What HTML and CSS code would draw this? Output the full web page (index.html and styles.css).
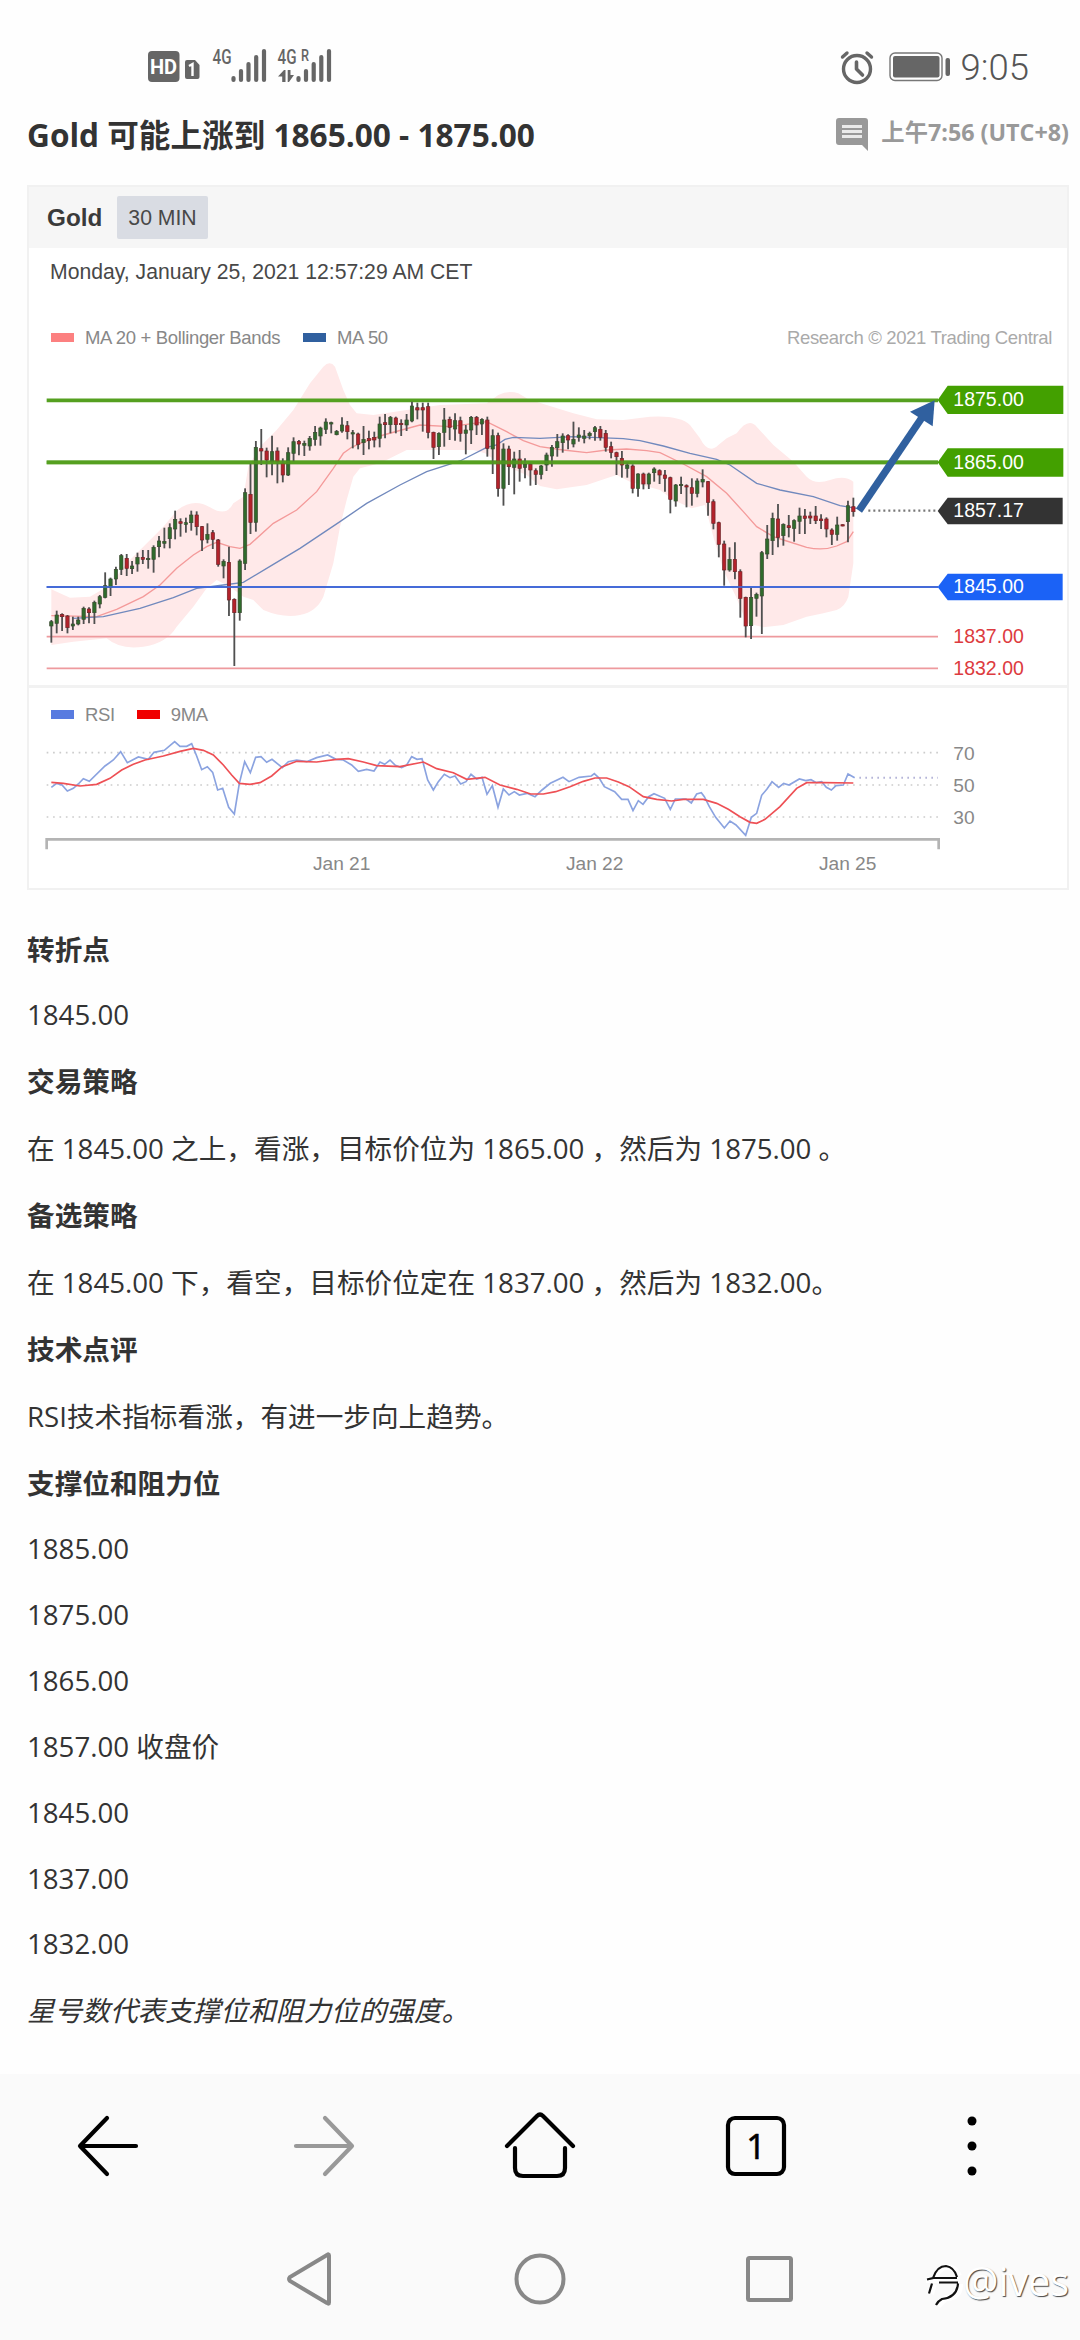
FILE: index.html
```html
<!DOCTYPE html>
<html lang="zh-CN">

<head>
    <meta charset="UTF-8">
    <meta name="viewport" content="width=device-width, initial-scale=1.0">
    <title>Gold 可能上涨到 1865.00 - 1875.00</title>
    <link rel="stylesheet" href="styles.css">
</head>

<body>
    <div class="status-bar">
        <svg class="signals" width="190" height="40" viewBox="146 46 190 40">
            <rect x="148" y="51" width="31.5" height="31" rx="4" />
            <text class="hd" x="150" y="74" textLength="27">HD</text>
            <path d="M187 60h8l4.500 5v12a2 2 0 0 1-2 2h-10.500a2 2 0 0 1-2-2v-15a2 2 0 0 1 2-2z" />
            <path class="sim" d="M189 66l3.500-2v12" />
            <text class="net" x="212.500" y="64" textLength="19" lengthAdjust="spacingAndGlyphs">4G</text>
            <path class="bars" d="M233.500 78v2M241 71v9M248.500 64v16M256.200 57v23M264 51v29" />
            <text class="net" x="277.500" y="64" textLength="19" lengthAdjust="spacingAndGlyphs">4G</text>
            <text class="net roam" x="301" y="61" textLength="8" lengthAdjust="spacingAndGlyphs">R</text>
            <path d="M282.200 82v-5.500H278l6-6.500h1.500v12zM287.700 70h2.800v5h3.500l-5 7h-1.300z" />
            <path class="bars" d="M298.500 78v2M306 71v9M313.700 64v16M321.300 57v23M329 51v29" />
        </svg>
        <div class="status-right">
            <svg width="34" height="36" viewBox="0 0 34 36">
                <g fill="none" stroke="#666" stroke-linecap="round">
                    <circle cx="17" cy="20" r="13.500" stroke-width="3.400" />
                    <path d="M16.500 13v7l6 6" stroke-width="3.600" stroke-linejoin="round" />
                    <path d="M2.500 8l4.500-4M31.500 8l-4.500-4" stroke-width="3.400" />
                </g>
            </svg>
            <svg width="62" height="30" viewBox="0 0 62 30">
                <rect x="1" y="1" width="52" height="27.500" rx="5" fill="none" stroke="#777" stroke-width="1.400" />
                <rect x="4" y="4" width="46.500" height="21.500" rx="2" fill="#666" />
                <rect x="56.500" y="6" width="4.500" height="18" rx="2" fill="#666" />
            </svg>
            <span class="clock">9:05</span>
        </div>
    </div>

    <div class="article">
        <div class="title-row">
            <h1>Gold 可能上涨到 1865.00 - 1875.00</h1>
            <div class="posted">
                <svg width="32" height="33" viewBox="0 0 32 33">
                    <path d="M3 0h26a3 3 0 0 1 3 3v30l-6-6H3a3 3 0 0 1-3-3V3a3 3 0 0 1 3-3z" fill="#999" />
                    <path d="M6 8.500h20M6 13.500h20M6 18.500h20" stroke="#fff" stroke-width="3" opacity=".8" />
                </svg>
                <span>上午7:56 (UTC+8)</span>
            </div>
        </div>

        <div class="card">
            <div class="card-head">
                <strong>Gold</strong>
                <span class="period">30 MIN</span>
            </div>
            <div class="date">Monday, January 25, 2021 12:57:29 AM CET</div>
            <div class="legend">
                <i class="swatch pink"></i><span class="bands">MA 20 + Bollinger Bands</span>
                <i class="swatch navy"></i><span>MA 50</span>
                <span class="credit">Research © 2021 Trading Central</span>
            </div>

            <svg class="price-chart" viewBox="-3 0 3114 1005">
                <path class="band" d="M64 718L90 730 120 743 180 740 240 705 290 640 340 590 400 530 440 482Q490 442 540 472T610 460L640 440 655 350 690 290 740 240 790 180 840 100 880 50Q900 30 915 50L940 120 960 165 980 190 1030 195 1130 180 1230 165 1370 160 1405 135Q1435 120 1465 130L1495 148 1550 165 1630 190 1700 208 1780 210 1860 200Q1950 195 1980 225L2010 265Q2035 315 2065 285L2090 265 2120 250Q2155 200 2180 230L2230 285 2290 335 2330 380Q2355 405 2400 390T2470 395L2470 640 2455 740Q2445 770 2420 780L2380 790 2330 800 2260 825 2200 832 2150 820 2120 745 2080 660 2050 560 2025 465 1985 475 1930 450 1890 420 1800 395 1760 375 1730 385 1670 405 1580 418 1530 408 1490 375 1430 350 1395 330 1365 310 1330 300 1130 300 1050 340 990 355 970 380 950 450 930 530 910 640 880 740Q860 785 810 795T700 780L670 750 640 740 600 710 560 690 530 715 490 770 440 830Q410 880 340 890T230 865L130 875 64 885z" />
                <path class="ma20" d="M64 797L200 800 260 778 340 740 390 705 440 655 490 615 530 590 560 577 600 590 630 595 660 583 730 520 800 480 860 425 910 355 940 310 965 292 990 280 1060 255 1170 225 1260 230 1370 215 1430 245 1480 272 1530 290 1600 300 1670 308 1730 300 1790 297 1850 302 1890 308 1960 342 2030 380 2090 430 2140 485 2180 530 2230 560 2270 573 2330 592Q2380 603 2420 588L2450 575 2470 545" />
                <path class="ma50" d="M130 805L220 800 330 775 430 743 500 715 580 705 640 697 730 643 810 595 930 515 1010 460 1110 405 1190 365 1290 333 1370 292 1400 285 1425 268 1450 262 1530 265 1630 260 1780 266 1830 272 1900 288 1980 310 2060 328 2100 345 2180 400 2250 420 2350 440 2430 467 2480 475" />
                <path class="support" d="M50 860H2724M50 955H2724" />
                <path class="pivot" d="M50 711H2724" />
                <path class="target" d="M50 151H2724M50 337H2724" />
                <g id="candles"></g>
                <path class="target top" d="M50 337H2724" />
                <path class="pivot top" d="M50 711H2724" />
                <path class="last" d="M2515 482H2724" />
                <path class="arrow" d="M2487 482L2675 204" />
                <path class="arrow-head" d="M2714 151L2640 185 2708 229z" />
                <path class="tag green" d="M2723 150L2753 107H3100V192H2753z" />
                <path class="tag green" d="M2723 337L2753 295H3100V380H2753z" />
                <path class="tag dark" d="M2723 483L2753 443H3098V523H2753z" />
                <path class="tag blue" d="M2723 711L2753 671H3098V751H2753z" />
                <g class="price">
                    <text x="2770" y="168">1875.00</text>
                    <text x="2770" y="358">1865.00</text>
                    <text x="2770" y="501">1857.17</text>
                    <text x="2770" y="729">1845.00</text>
                    <text class="red-text" x="2770" y="879">1837.00</text>
                    <text class="red-text" x="2770" y="975">1832.00</text>
                </g>
            </svg>

            <div class="legend rsi-legend">
                <i class="swatch sky"></i><span class="rsi">RSI</span>
                <i class="swatch red"></i><span>9MA</span>
            </div>

            <svg class="rsi-chart" viewBox="-3 150 3114 450">
                <path class="grid" d="M50 218H2726M50 315H2726M50 411H2726" />
                <path class="rsi-last" d="M2488 293H2724" />
                <polyline class="rsi-line" points="64,322 80,310 96,315 112,333 130,325 145,312 160,296 178,304 225,258 250,240 272,215 292,248 325,231 355,238 372,217 403,211 434,185 450,199 470,199 485,191 500,228 515,269 532,260 548,277 563,330 578,325 596,382 613,402 628,310 644,245 661,278 677,232 693,230 710,247 726,238 757,263 775,245 800,240 830,245 860,233 893,225 918,238 940,240 965,255 985,274 1010,268 1032,273 1050,246 1064,253 1080,240 1096,256 1115,263 1130,255 1145,230 1161,238 1176,236 1193,300 1210,330 1225,305 1243,283 1260,293 1275,288 1292,312 1308,305 1323,283 1340,297 1356,292 1371,343 1387,317 1404,382 1420,327 1437,345 1453,335 1468,345 1491,340 1515,350 1536,330 1561,310 1599,292 1617,305 1647,292 1684,288 1693,281 1708,295 1723,320 1754,335 1775,358 1794,358 1809,392 1825,362 1839,373 1856,350 1872,341 1904,355 1921,388 1936,357 1968,357 1984,369 2000,342 2014,338 2023,350 2038,380 2057,412 2083,444 2100,423 2118,435 2147,466 2164,412 2180,400 2195,346 2211,327 2226,305 2246,322 2261,310 2277,315 2308,297 2327,302 2343,299 2359,308 2375,305 2389,322 2404,330 2418,317 2440,315 2454,282 2474,293" />
                <polyline class="rsi-ma" points="64,307 100,310 150,318 200,313 240,295 275,270 310,253 345,240 400,228 450,214 490,205 520,211 550,225 580,255 605,285 628,310 660,313 690,308 725,288 757,260 800,244 860,246 920,238 955,236 1000,246 1040,257 1110,260 1180,246 1220,266 1270,278 1310,298 1365,292 1410,315 1460,328 1502,342 1540,342 1577,335 1620,320 1660,304 1695,294 1730,294 1765,306 1797,320 1840,350 1880,358 1925,363 1960,358 2020,358 2060,370 2095,388 2130,410 2160,427 2180,430 2205,418 2250,380 2300,325 2330,308 2380,308 2470,309" />
                <path class="axis" d="M50 508V478H2726V508" />
                <g class="labels">
                    <text x="2770" y="239">70</text>
                    <text x="2770" y="335">50</text>
                    <text x="2770" y="431">30</text>
                    <text class="day" x="935" y="569">Jan 21</text>
                    <text class="day" x="1694" y="569">Jan 22</text>
                    <text class="day" x="2453" y="569">Jan 25</text>
                </g>
            </svg>
        </div>

        <div class="text">
            <p class="cn"><strong>转折点</strong></p>
            <p>1845.00</p>
            <p class="cn"><strong>交易策略</strong></p>
            <p class="cn">在 1845.00 之上，看涨，目标价位为 1865.00 ，然后为 1875.00 。</p>
            <p class="cn"><strong>备选策略</strong></p>
            <p class="cn">在 1845.00 下，看空，目标价位定在 1837.00 ，然后为 1832.00。</p>
            <p class="cn"><strong>技术点评</strong></p>
            <p class="cn">RSI技术指标看涨，有进一步向上趋势。</p>
            <p class="cn"><strong>支撑位和阻力位</strong></p>
            <p>1885.00</p>
            <p>1875.00</p>
            <p>1865.00</p>
            <p class="cn">1857.00 收盘价</p>
            <p>1845.00</p>
            <p>1837.00</p>
            <p>1832.00</p>
            <p class="cn"><em>星号数代表支撑位和阻力位的强度。</em></p>
        </div>
    </div>

    <div class="bottom">
        <div class="browser-bar">
            <svg width="72" height="72" viewBox="0 0 72 72">
                <path d="M64 36H8M35 8L8 36l27 28" />
            </svg>
            <svg class="off" width="72" height="72" viewBox="0 0 72 72">
                <path d="M8 36h56M37 8l27 28-27 28" />
            </svg>
            <svg width="72" height="72" viewBox="0 0 72 72">
                <path d="M3 36L33 6q3-3 6 0l30 30M11 38v20q0 8 8 8h34q8 0 8-8V38" />
            </svg>
            <svg width="72" height="72" viewBox="0 0 72 72">
                <rect x="8" y="8" width="56" height="56" rx="7" />
                <text x="36" y="49">1</text>
            </svg>
            <svg class="dots" width="72" height="72" viewBox="0 0 72 72">
                <circle cx="36" cy="11" r="4.500" />
                <circle cx="36" cy="36" r="4.500" />
                <circle cx="36" cy="61" r="4.500" />
            </svg>
        </div>
        <div class="system-bar">
            <svg width="52" height="56" viewBox="0 0 52 56">
                <path d="M45 4.500v47q0 2-2 .5L6 30q-2-2 0-4L43 4q2-1.500 2 .5z" />
            </svg>
            <svg width="52" height="56" viewBox="0 0 52 56">
                <circle cx="26" cy="28" r="23.500" />
            </svg>
            <svg width="52" height="56" viewBox="0 0 52 56">
                <rect x="4" y="7" width="43" height="42" rx="1.500" />
            </svg>
        </div>
        <div class="watermark">
            <svg width="37" height="44" viewBox="0 0 37 44">
                <path class="glow" d="M0 16h34M9 14Q13 3 21 3t12 9M8 20L5 30M34 20Q34 34 20 34l-8 8" />
                <path class="ink" d="M1 15.500L7 14Q11 2 20 2q8 1 11 11M7 14h24M13 18.500h19M6 19.500L3 29.500M32 19.500q-1 14-16 15.500-4 2-6 6" />
            </svg>
            <span>@ives</span>
        </div>
    </div>

    <script src="chart.js"></script>
</body>

</html>
```
FILE: styles.css
```css
body {
    margin: 0;
    width: 1080px;
    height: 2340px;
    overflow: hidden;
    background-color: #fefefe;
    color: #333;
    font-family: "Open Sans", "Noto Sans CJK SC", sans-serif;
    display: flex;
    flex-direction: column;
}

svg {
    display: block;
}

/* status bar */
.status-bar {
    height: 110px;
    padding: 0 51px 0 146px;
    display: flex;
    justify-content: space-between;
    box-sizing: border-box;
    flex: none;
}

.signals {
    margin-top: 46px;
    fill: #666;
    font-family: Roboto, sans-serif;
    font-weight: bold;
}

.hd {
    fill: #fff;
    font-size: 20px;
}

.sim {
    fill: none;
    stroke: #fff;
    stroke-width: 2.4px;
}

.net {
    font-size: 20px;
    font-weight: 500;
}

.roam {
    font-size: 16px;
}

.bars {
    fill: none;
    stroke: #666;
    stroke-width: 4.2px;
    stroke-linecap: round;
}

.status-right {
    display: flex;
    align-items: center;
    height: 38px;
    margin-top: 48px;
}

.status-right svg + svg {
    margin: 0 10px 0 15px;
}

.clock {
    font: 300 36.5px/38px Roboto, sans-serif;
    color: #555;
    margin-top: 2px;
}

/* article */
.article {
    padding: 0 11px 0 27px;
    flex: 1;
}

.title-row {
    display: flex;
    justify-content: space-between;
    height: 75px;
}

h1 {
    margin: 0;
    font-size: 31.6px;
    line-height: 50px;
}

.posted {
    display: flex;
    gap: 13px;
    padding-top: 8px;
    color: #999;
    font-size: 23.3px;
    font-weight: bold;
    line-height: 28px;
}

/* chart card */
.card {
    height: 705px;
    box-sizing: border-box;
    border: 2px solid #f1f1f1;
    font-family: "Liberation Sans", sans-serif;
    background-color: #fff;
}

.card-head {
    height: 61px;
    padding-left: 18px;
    display: flex;
    align-items: center;
    gap: 15px;
    background-color: #f6f6f6;
    font-size: 24.3px;
    color: #3a3a3a;
}

.period {
    padding: 0 11px;
    font-size: 21.2px;
    line-height: 43px;
    border-radius: 2px;
    background-color: #d9dce3;
    color: #484848;
}

.date {
    height: 47px;
    padding-left: 21px;
    font-size: 21.2px;
    line-height: 47px;
    color: #484848;
}

.legend {
    height: 55px;
    padding: 27px 15px 0 22px;
    box-sizing: border-box;
    display: flex;
    font-size: 18.5px;
    letter-spacing: -0.35px;
    line-height: 31px;
    color: #888;
}

.swatch {
    width: 23px;
    height: 9px;
    margin: 11px 11px 0 0;
}

.pink {
    background-color: #fc8080;
}

.navy {
    background-color: #30609f;
}

.sky {
    background-color: #587be0;
}

.red {
    background-color: #f00000;
}

.bands {
    margin-right: 23px;
}

.rsi {
    margin-right: 22px;
}

.credit {
    margin-left: auto;
    color: #aaa;
}

.price-chart {
    width: 1038px;
    height: 335px;
    border-bottom: 3px solid #f2f2f2;
}

.rsi-legend {
    height: 42px;
    padding-top: 11px;
}

.rsi-chart {
    width: 1038px;
    height: 150px;
}

.price-chart path,
.rsi-chart path,
.rsi-chart polyline {
    fill: none;
}

.price-chart .band {
    fill: #ffe9e9;
}

.ma20 {
    stroke: #f49a9a;
    stroke-width: 4;
}

.ma50 {
    stroke: #7189bd;
    stroke-width: 4;
}

.support {
    stroke: #ee9a9e;
    stroke-width: 5;
}

.pivot {
    stroke: #456bd8;
    stroke-width: 6;
}

.target {
    stroke: #55a020;
    stroke-width: 11;
}

.top {
    opacity: .75;
}

.last {
    stroke: #777;
    stroke-width: 7;
    stroke-dasharray: 6 9;
}

.arrow {
    stroke: #30609f;
    stroke-width: 22;
}

.price-chart .arrow-head {
    fill: #30609f;
}

.price-chart .green {
    fill: #43a000;
}

.price-chart .dark {
    fill: #333;
}

.price-chart .blue {
    fill: #1b62f6;
}

.price {
    font-size: 58.5px;
    fill: #fff;
}

.red-text {
    fill: #dd3b40;
}

.wick {
    stroke: #505050;
    stroke-width: 5.5;
}

.up {
    fill: #2f6b2c;
    stroke: #3b4a30;
}

.down {
    fill: #b3222b;
    stroke: #6d2528;
}

.grid {
    stroke: #ccc;
    stroke-width: 5;
    stroke-dasharray: 5 14.2;
}

.rsi-last {
    stroke: #b5b5d8;
    stroke-width: 6;
    stroke-dasharray: 5 13;
}

.rsi-line {
    stroke: #8ba3e0;
    stroke-width: 5;
}

.rsi-ma {
    stroke: #ee5055;
    stroke-width: 5;
}

.axis {
    stroke: #b4b4b4;
    stroke-width: 8;
}

.labels {
    font-size: 57.5px;
    fill: #888;
}

.day {
    text-anchor: middle;
}

/* analysis text */
.text {
    padding-top: 38.6px;
    font-size: 27.65px;
    line-height: 38px;
}

.text p {
    margin: 0 0 27.6px;
}

.text .cn {
    padding-top: 1.3px;
}

/* browser and system navigation */
.bottom {
    position: relative;
    flex: none;
    height: 266px;
    background-color: #fafafa;
}

.browser-bar {
    display: grid;
    grid-template-columns: repeat(5, 1fr);
    justify-items: center;
    padding-top: 36px;
}

.browser-bar svg {
    fill: none;
    stroke: #000;
    stroke-width: 4.2px;
    stroke-linecap: round;
    stroke-linejoin: round;
}

.browser-bar .off {
    stroke: #999;
}

.browser-bar .dots {
    fill: #000;
    stroke: none;
}

.browser-bar text {
    font: 34px "Noto Sans", sans-serif;
    text-anchor: middle;
    fill: #000;
    stroke: #000;
    stroke-width: .5px;
}

.system-bar {
    display: flex;
    justify-content: center;
    gap: 178px;
    padding-top: 69px;
}

.system-bar svg {
    fill: none;
    stroke: #888;
    stroke-width: 4px;
}

.watermark {
    position: absolute;
    top: 190px;
    left: 926px;
    display: flex;
    font: 39.5px/34px "Open Sans", sans-serif;
    color: #fff;
    text-shadow: 1px 1px 1px #444;
}

.watermark path {
    fill: none;
}

.glow {
    stroke: #fff;
    stroke-width: 6;
}

.ink {
    stroke: #111;
    stroke-width: 2.2;
}
```
FILE: chart.js
```js
// high, body top, body bottom, low, direction (1 = up, 0 = down)
var candles = [
    [810,815,828,878,1],[782,795,820,850,1],[790,793,800,843,0],[795,798,833,850,0],[800,822,828,840,1],
    [800,810,822,826,1],[770,775,808,822,1],[772,777,788,820,0],[752,757,788,822,1],[735,740,762,775,1],
    [667,707,742,745,1],[683,687,712,738,1],[650,658,687,705,1],[612,617,658,675,1],[612,625,655,678,0],
    [633,648,656,672,1],[608,622,642,665,1],[600,622,628,642,0],[600,625,629,656,1],[586,592,628,668,1],
    [558,573,590,622,1],[533,574,580,595,1],[520,533,566,595,1],[482,508,537,568,1],[505,515,520,560,0],
    [503,518,523,548,1],[482,495,518,542,1],[484,495,530,556,0],[528,530,570,603,0],[520,553,568,580,1],
    [540,548,568,597,0],[567,570,643,650,0],[628,634,648,685,1],[590,637,750,798,0],[745,748,788,948,0],
    [628,633,788,812,1],[415,428,640,660,1],[340,433,517,552,0],[273,292,517,545,1],[237,296,303,345,0],
    [293,303,330,382,0],[257,305,335,376,1],[292,303,335,400,0],[325,340,375,397,0],[292,308,375,378,1],
    [262,275,310,335,1],[270,274,282,316,0],[272,280,286,318,1],[258,265,288,302,1],[228,247,268,287,1],
    [230,234,258,287,1],[205,216,238,252,1],[215,218,222,250,1],[240,244,254,256,1],[202,225,243,248,1],
    [213,227,245,268,0],[240,248,252,295,1],[248,252,283,298,0],[228,268,278,315,1],[242,265,272,298,0],
    [245,262,270,292,0],[200,222,265,292,1],[192,218,224,265,0],[198,202,224,250,1],[200,204,224,250,0],
    [208,220,224,258,0],[192,210,225,243,1],[155,168,213,217,1],[158,173,180,208,0],[158,173,180,245,0],
    [158,170,247,265,0],[245,247,292,327,0],[247,250,290,315,1],[174,210,247,290,1],[200,208,232,270,0],
    [190,212,237,272,1],[200,212,250,275,0],[225,240,250,313,1],[198,202,240,282,1],[198,202,225,255,0],
    [205,208,222,255,1],[200,210,295,320,0],[238,257,297,372,1],[248,257,415,440,0],[280,297,415,467,1],
    [287,297,350,405,0],[305,327,352,433,1],[300,327,355,395,0],[325,343,352,385,1],[338,343,360,407,0],
    [355,362,373,405,0],[345,348,373,388,1],[308,315,345,363,1],[285,292,318,350,1],[252,275,293,320,1],
    [250,258,278,308,1],[253,257,270,298,0],[215,268,282,292,1],[232,255,262,275,1],[240,258,265,280,1],
    [245,250,257,268,1],[228,233,245,272,1],[228,238,262,272,0],[240,250,292,305,0],[275,290,307,325,0],
    [305,308,320,375,0],[303,325,345,383,0],[337,345,355,383,1],[343,348,415,430,0],[370,372,415,440,1],
    [368,372,402,418,0],[368,372,402,417,1],[352,357,368,395,1],[358,362,375,402,0],[360,375,385,425,0],
    [380,383,448,490,0],[402,405,453,470,1],[380,403,407,432,1],[403,407,411,472,0],[385,413,430,467,0],
    [385,393,430,442,1],[358,388,396,412,1],[393,395,457,497,0],[448,455,520,538,0],[515,518,583,622,0],
    [572,582,660,707,0],[592,628,660,665,1],[577,628,665,688,0],[658,665,745,803,0],[740,742,828,862,0],
    [713,742,827,867,1],[728,733,745,800,1],[603,608,738,852,1],[525,567,612,627,1],[488,505,572,615,1],
    [462,507,562,592,0],[520,523,557,587,1],[495,527,533,562,0],[508,512,535,575,1],[473,498,514,552,1],
    [477,498,505,552,0],[485,498,504,522,0],[468,498,512,522,0],[493,507,512,537,0],[502,507,537,562,0],
    [535,540,553,585,0],[500,525,553,572,1],[523,524,528,529,0],[452,467,515,577,1],[443,470,485,500,0]
];

var step = 16.148;
var markup = '';

for (var i = 0; i < candles.length; i++) {
    var c = candles[i];
    var x = (64 + i * step).toFixed(1);
    markup += '<line class="wick" x1="' + x + '" x2="' + x + '" y1="' + c[0] + '" y2="' + c[3] + '"/>';
    markup += '<rect class="' + (c[4] ? 'up' : 'down') + '" x="' + (x - 5) + '" y="' + c[1] +
        '" width="10" height="' + (c[2] - c[1]) + '" stroke-width="2"/>';
}

document.getElementById('candles').innerHTML = markup;
```
